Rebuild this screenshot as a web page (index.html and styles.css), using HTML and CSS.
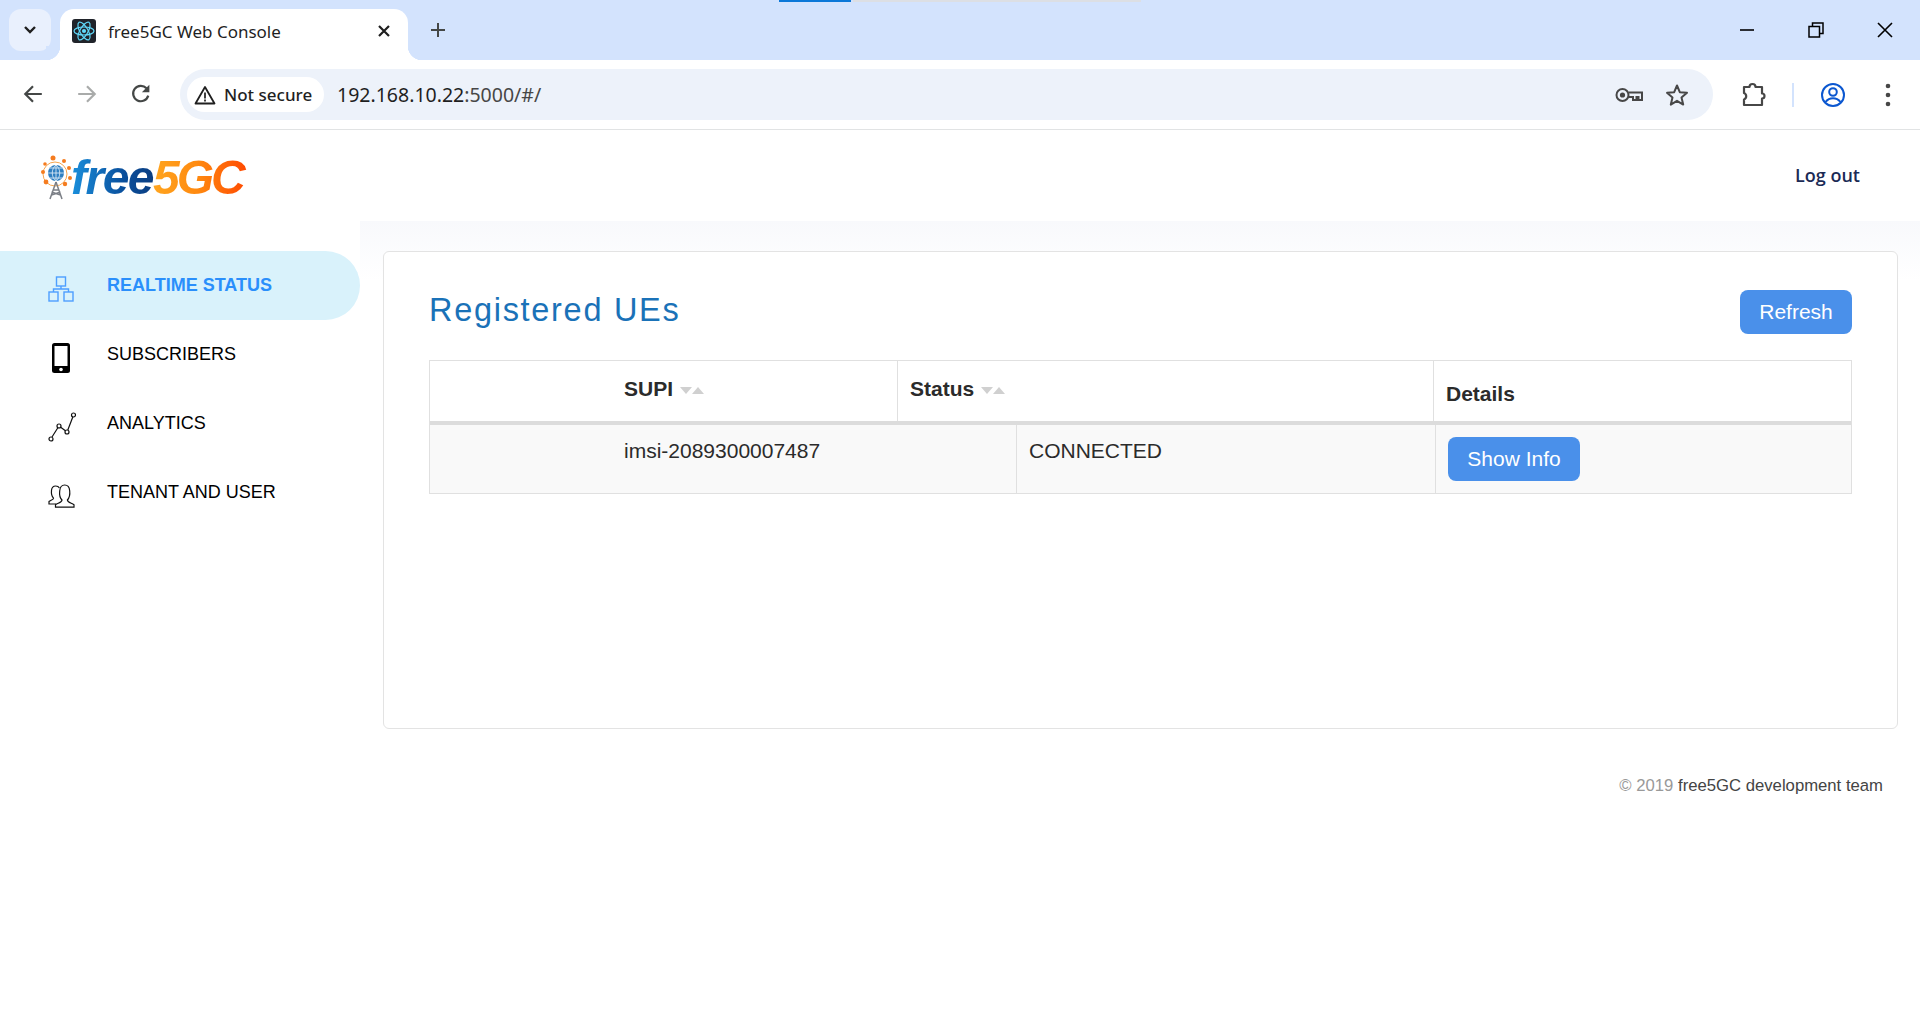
FILE: index.html
```html
<!DOCTYPE html>
<html lang="en">
<head>
    <meta charset="UTF-8">
    <meta name="viewport" content="width=device-width, initial-scale=1.0">
    <title>free5GC Web Console</title>
    <link rel="stylesheet" href="styles.css">
</head>
<body>
    <div class="browser">
        <div class="tabstrip">
            <div class="progress"><span class="progress-done"></span><span class="progress-rest"></span></div>
            <button class="tab-search">
                <svg width="14" height="10" viewBox="0 0 14 10"><path d="M2 2l5 5 5-5" fill="none" stroke="#1f1f1f" stroke-width="2.4"/></svg>
            </button>
            <div class="tab">
                <svg class="favicon" width="24" height="24" viewBox="0 0 24 24">
                    <rect width="24" height="24" rx="3" fill="#20232a"/>
                    <circle cx="12" cy="12" r="2.1" fill="#61dafb"/>
                    <g fill="none" stroke="#61dafb" stroke-width="1.2">
                        <ellipse cx="12" cy="12" rx="10" ry="4"/>
                        <ellipse cx="12" cy="12" rx="10" ry="4" transform="rotate(60 12 12)"/>
                        <ellipse cx="12" cy="12" rx="10" ry="4" transform="rotate(120 12 12)"/>
                    </g>
                </svg>
                <span class="tab-title">free5GC Web Console</span>
                <svg class="tab-close" width="14" height="14" viewBox="0 0 14 14"><path d="M2 2l10 10M12 2L2 12" stroke="#1f1f1f" stroke-width="2.2"/></svg>
            </div>
            <svg class="new-tab" width="18" height="18" viewBox="0 0 18 18"><path d="M9 2v14M2 9h14" stroke="#444746" stroke-width="2"/></svg>
            <div class="window-controls">
                <svg width="16" height="16" viewBox="0 0 16 16"><path d="M1 8h14" stroke="#000" stroke-width="1.6"/></svg>
                <svg width="16" height="16" viewBox="0 0 16 16"><path d="M1 4.5h10.5V15H1zM4.5 4.5V1H15v10.5h-3.5" fill="none" stroke="#000" stroke-width="1.5"/></svg>
                <svg width="16" height="16" viewBox="0 0 16 16"><path d="M1 1l14 14M15 1L1 15" stroke="#000" stroke-width="1.6"/></svg>
            </div>
        </div>
        <div class="toolbar">
            <div class="nav-buttons">
                <svg width="22" height="22" viewBox="0 0 20 20"><path d="M18 10H3M10 3l-7 7 7 7" fill="none" stroke="#444746" stroke-width="2"/></svg>
                <svg width="22" height="22" viewBox="0 0 20 20"><path d="M2 10h15M10 3l7 7-7 7" fill="none" stroke="#a9abaa" stroke-width="2"/></svg>
                <svg width="22" height="22" viewBox="0 0 20 20"><path d="M16.6 11.5A7 7 0 1 1 15 4.8" fill="none" stroke="#444746" stroke-width="2"/><path d="M17.6 1.5v6.8h-6.8z" fill="#444746"/></svg>
            </div>
            <div class="omnibox">
                <div class="chip">
                    <svg width="22" height="20" viewBox="0 0 22 20"><path d="M11 2l9.5 16.5h-19z" fill="none" stroke="#1f1f1f" stroke-width="1.8" stroke-linejoin="round"/><path d="M11 7.5v6M11 14.6v1.8" stroke="#1f1f1f" stroke-width="1.7"/></svg>
                    <span>Not secure</span>
                </div>
                <span class="url">192.168.10.22<span class="url-rest">:5000/#/</span></span>
                <svg class="omni-key" width="28" height="16" viewBox="0 0 28 16"><circle cx="7.5" cy="8" r="6" fill="none" stroke="#474747" stroke-width="2"/><circle cx="7.5" cy="8" r="2.6" fill="#474747"/><path d="M13.5 5.5H27v7.500h-3.500v-3h-2v3H18v-3h-4.500" fill="none" stroke="#474747" stroke-width="2"/></svg>
                <svg class="omni-star" width="24" height="24" viewBox="0 0 24 24"><path d="M12 2.500l2.800 6.700 7.200.6-5.500 4.700 1.700 7.100-6.200-3.800-6.200 3.800 1.700-7.100L2 9.800l7.200-.6z" fill="none" stroke="#474747" stroke-width="2" stroke-linejoin="round"/></svg>
            </div>
            <div class="toolbar-actions">
                <svg width="26" height="26" viewBox="0 0 26 26"><path d="M3 5h5.500a3 3 0 0 1 6 0H21v6.500a2.500 2.500 0 0 1 0 5V23H3v-5.500a3.500 3.500 0 0 0 0-6.500z" fill="none" stroke="#474747" stroke-width="2.200" stroke-linejoin="round"/></svg>
                <span class="toolbar-divider"></span>
                <svg width="26" height="26" viewBox="0 0 26 26"><circle cx="13" cy="13" r="11" fill="none" stroke="#0b57d0" stroke-width="2"/><circle cx="13" cy="10" r="3.800" fill="none" stroke="#0b57d0" stroke-width="2"/><path d="M5.500 20c2-2.600 4.500-3.800 7.500-3.800s5.500 1.200 7.500 3.800" fill="none" stroke="#0b57d0" stroke-width="2"/></svg>
                <svg class="menu-dots" width="6" height="24" viewBox="0 0 6 24"><circle cx="3" cy="3" r="2.300" fill="#474747"/><circle cx="3" cy="12" r="2.300" fill="#474747"/><circle cx="3" cy="21" r="2.300" fill="#474747"/></svg>
            </div>
        </div>
    </div>

    <header class="site-header">
        <div class="logo">
            <svg width="32" height="46" viewBox="0 0 32 46">
                <circle cx="15" cy="19" r="12" fill="none" stroke="#f6a650" stroke-width="1"/>
                <g fill="#f57c1f">
                    <circle cx="13" cy="3" r="2.500"/><circle cx="24" cy="6" r="2"/><circle cx="29" cy="13" r="2"/>
                    <circle cx="30" cy="23" r="2"/><circle cx="25" cy="29" r="2.200"/><circle cx="3" cy="17" r="2"/>
                    <circle cx="6" cy="27" r="2.400"/><circle cx="5" cy="9" r="1.800"/>
                </g>
                <circle cx="16" cy="18" r="8" fill="#2f7fc1"/>
                <path d="M8 18h16M16 10v16M10 13h12M10 23h12M16 10c-5 4-5 12 0 16M16 10c5 4 5 12 0 16" fill="none" stroke="#e6f1fa" stroke-width=".8"/>
                <path d="M16 27l-6 17M16 27l6 17M13 35h6M11.500 40l9-3M20.500 40l-9-3" fill="none" stroke="#7b7f86" stroke-width="1.500"/>
            </svg>
            <span class="logo-free">free</span><span class="logo-5gc">5GC</span>
        </div>
        <a class="logout" href="#">Log out</a>
    </header>

    <div class="page">
        <nav class="sidebar">
            <a class="nav-item active" href="#">
                <svg width="26" height="26" viewBox="0 0 26 26" fill="none" stroke="#4d9fff" stroke-width="1.400">
                    <rect x="8.500" y="1" width="9" height="9"/><rect x="1" y="16" width="9" height="9"/><rect x="16" y="16" width="9" height="9"/>
                    <path d="M13 10v3M5.500 16v-3h15v3"/>
                </svg>
                REALTIME STATUS
            </a>
            <a class="nav-item" href="#">
                <svg width="26" height="32" viewBox="0 0 26 32">
                    <rect x="4" y="1" width="18" height="30" rx="2.500" fill="#000"/>
                    <rect x="6.500" y="4" width="13" height="20" fill="#fff"/>
                    <circle cx="13" cy="27.500" r="1.800" fill="#fff"/>
                </svg>
                SUBSCRIBERS
            </a>
            <a class="nav-item" href="#">
                <svg width="28" height="30" viewBox="0 0 28 30" fill="none" stroke="#111" stroke-width="1.200">
                    <circle cx="3" cy="27" r="2"/><circle cx="11" cy="14" r="2"/><circle cx="19" cy="20" r="2"/><circle cx="25.500" cy="3" r="2"/>
                    <path d="M4 25l6-9.500M12.700 15.200l4.700 3.600M19.800 18l5-13"/>
                </svg>
                ANALYTICS
            </a>
            <a class="nav-item" href="#">
                <svg width="28" height="24" viewBox="0 0 28 24" fill="none" stroke="#111" stroke-width="1.200">
                    <path d="M8 20H1v-2.500c1.500-1.300 4.500-1.800 4.500-3.300-1.800-2-2.300-5-2-8C3.800 3.400 5.500 2 7.700 2c1.600 0 3 .7 3.700 2"/>
                    <path d="M7.500 23.200v-2.500c2.500-1.700 6.500-2.200 6.500-4.700-2-2-2.700-5.500-2.300-9C12 3 14 1 16.700 1s4.700 2 5 5.700c.4 3.500-.3 7-2.300 9.300 0 2.500 4 3 6.600 4.700v2.500z"/>
                </svg>
                TENANT AND USER
            </a>
        </nav>

        <main class="content">
            <section class="card">
                <div class="card-head">
                    <h2>Registered UEs</h2>
                    <button class="btn btn-refresh">Refresh</button>
                </div>
                <div class="ue-table">
                    <div class="ue-row ue-row-head">
                        <div class="cell cell-supi">SUPI <span class="sort"><i class="sort-down"></i><i class="sort-up"></i></span></div>
                        <div class="cell">Status <span class="sort"><i class="sort-down"></i><i class="sort-up"></i></span></div>
                        <div class="cell cell-details">Details</div>
                    </div>
                    <div class="ue-row ue-row-body">
                        <div class="cell cell-supi">imsi-2089300007487</div>
                        <div class="cell">CONNECTED</div>
                        <div class="cell cell-action"><button class="btn btn-info">Show Info</button></div>
                    </div>
                </div>
            </section>
            <footer class="site-footer">© 2019 <span>free5GC development team</span></footer>
        </main>
    </div>
</body>
</html>
```

FILE: styles.css
```css
* {
    box-sizing: border-box;
}

html, body {
    height: 100%;
}

body {
    margin: 0;
    font-family: "Liberation Sans", Arial, sans-serif;
    background-color: #fff;
    color: #333;
    display: flex;
    flex-direction: column;
    overflow: hidden;
}

svg {
    display: block;
    flex: none;
}

/* browser chrome */
.tabstrip {
    height: 60px;
    background-color: #d3e3fd;
    display: flex;
    align-items: flex-start;
    padding: 9px 27px 0 9px;
    position: relative;
}

.progress {
    position: absolute;
    top: 0;
    left: 779px;
    display: flex;
    gap: 2px;
    height: 2px;
}

.progress-done {
    width: 72px;
    background-color: #0b78d8;
}

.progress-rest {
    width: 288px;
    background-color: #dcdfe4;
}

.tab-search {
    width: 42px;
    height: 42px;
    border: none;
    border-radius: 12px;
    background-color: #e9f0fd;
    display: flex;
    align-items: center;
    justify-content: center;
    padding: 0;
}

.tab {
    width: 348px;
    height: 51px;
    margin-left: 9px;
    background-color: #fff;
    border-radius: 14px 14px 0 0;
    display: flex;
    align-items: center;
    padding: 0 17px 8px 12px;
    position: relative;
}

.tab::before,
.tab::after {
    content: "";
    position: absolute;
    bottom: 0;
    width: 14px;
    height: 14px;
}

.tab::before {
    left: -14px;
    background: radial-gradient(circle at 0 0, #d3e3fd 14px, #fff 14.5px);
}

.tab::after {
    right: -14px;
    background: radial-gradient(circle at 100% 0, #d3e3fd 14px, #fff 14.5px);
}

.tab-title {
    margin: 1px 0 0 12px;
    flex: 1;
    font-family: "Noto Sans", sans-serif;
    font-size: 17px;
    color: #1f1f1f;
}

.new-tab {
    margin: 12px 0 0 21px;
}

.window-controls {
    margin-left: auto;
    display: flex;
    gap: 53px;
    padding-top: 13px;
}

.toolbar {
    height: 70px;
    background-color: #fff;
    border-radius: 14px 14px 0 0;
    border-bottom: 1px solid #e1e3e4;
    display: flex;
    align-items: flex-start;
    padding: 9px 24px 0 22px;
    position: relative;
}

.nav-buttons {
    display: flex;
    gap: 32px;
    width: 158px;
    padding-top: 14px;
}

.omnibox {
    width: 1533px;
    height: 51px;
    background-color: #edf2fa;
    border-radius: 26px;
    display: flex;
    align-items: center;
    padding: 0 24px 0 7px;
}

.chip {
    height: 35px;
    width: 137px;
    background-color: #fff;
    border-radius: 18px;
    display: flex;
    align-items: center;
    gap: 8px;
    padding-left: 7px;
    font-family: "Noto Sans", sans-serif;
    font-size: 17px;
    font-weight: 500;
    color: #1f1f1f;
    white-space: nowrap;
}

.url {
    margin-left: 13px;
    font-family: "Noto Sans", sans-serif;
    font-size: 19.500px;
    color: #1f1f1f;
}

.url-rest {
    color: #474747;
}

.omni-key {
    margin-left: auto;
}

.omni-star {
    margin-left: 22px;
}

.toolbar-actions {
    display: flex;
    align-items: center;
    height: 51px;
    margin-left: 28px;
}

.toolbar-divider {
    width: 2px;
    height: 24px;
    background-color: #d3e3fd;
    margin: 0 26px 0 25px;
}

.menu-dots {
    margin-left: 39px;
}

/* app header */
.site-header {
    height: 91px;
    display: flex;
    align-items: center;
    justify-content: space-between;
    padding: 0 60px 0 40px;
}

.logo {
    display: flex;
    align-items: center;
    font-style: italic;
    font-weight: bold;
    font-size: 48px;
    line-height: 46px;
    margin-top: 5px;
}

.logo-free {
    margin-left: -1px;
    letter-spacing: -1.500px;
    padding-right: 6px;
    background: linear-gradient(90deg, #1a8fdc, #0a4f9c 60%, #0b3a7c);
    -webkit-background-clip: text;
    background-clip: text;
    color: transparent;
}

.logo-5gc {
    margin-left: -6px;
    letter-spacing: -3px;
    padding-right: 8px;
    background: linear-gradient(90deg, #ffa51f, #ff8a10 45%, #ff4400);
    -webkit-background-clip: text;
    background-clip: text;
    color: transparent;
}

.logout {
    font-family: "Open Sans", sans-serif;
    font-size: 18px;
    font-weight: 600;
    color: #1b2a55;
    text-decoration: none;
    margin-top: -1px;
}

/* page */
.page {
    flex: 1;
    display: flex;
}

.sidebar {
    width: 360px;
    padding-top: 30px;
    flex: none;
}

.nav-item {
    height: 69px;
    display: flex;
    align-items: center;
    font-size: 18px;
    color: #000;
    text-decoration: none;
    position: relative;
    padding-left: 107px;
}

.nav-item svg {
    position: absolute;
    left: 48px;
    top: calc(50% + 3px);
    transform: translateY(-50%);
}

.nav-item.active {
    background-color: #d9f2fb;
    border-radius: 0 35px 35px 0;
    color: #2a8ffb;
    font-weight: bold;
}

.content {
    flex: 1;
    padding: 30px 22px 0 23px;
    background: linear-gradient(to bottom, #f8f9fc, #fff 60px);
}

.card {
    height: 478px;
    background-color: #fff;
    border: 1px solid #e3e3e3;
    border-radius: 6px;
    padding: 38px 45px 0 45px;
}

.card-head {
    display: flex;
    justify-content: space-between;
    height: 70px;
}

.card-head h2 {
    margin: 0;
    font-size: 32.500px;
    line-height: 40px;
    font-weight: normal;
    letter-spacing: 1.700px;
    color: #1a72b8;
}

.btn {
    border: none;
    border-radius: 8px;
    background-color: #4a90ea;
    color: #fff;
    font-family: "Liberation Sans", Arial, sans-serif;
    font-size: 21px;
    height: 44px;
    padding: 0;
}

.btn-refresh {
    width: 112px;
}

.btn-info {
    width: 132px;
}

.ue-table {
    border: 1px solid #e0e0e0;
    font-size: 21px;
    color: #2b2b2b;
}

.ue-row {
    display: grid;
}

.ue-row-head {
    grid-template-columns: 468px 536px 1fr;
    height: 64px;
    border-bottom: 4px solid #dcdcdc;
    font-weight: bold;
}

.ue-row-head .cell {
    padding-top: 16px;
}

.ue-row-head .cell-details {
    padding-top: 21px;
}

.ue-row-body {
    grid-template-columns: 587px 419px 1fr;
    height: 68px;
    background-color: #f9f9f9;
}

.cell {
    padding: 14px 12px 0;
    border-right: 1px solid #e0e0e0;
}

.cell:last-child {
    border-right: none;
}

.cell-supi {
    padding-left: 194px;
}

.ue-row-body .cell-action {
    padding-top: 12px;
}

.sort {
    display: inline-flex;
    gap: 0;
    margin-left: 1px;
    vertical-align: middle;
}

.sort i {
    border-left: 6px solid transparent;
    border-right: 6px solid transparent;
}

.sort-down {
    border-top: 7px solid #d0d0d0;
}

.sort-up {
    border-bottom: 7px solid #d0d0d0;
}

.site-footer {
    margin-top: 47px;
    padding-right: 15px;
    text-align: right;
    font-size: 16.700px;
    color: #999;
}

.site-footer span {
    color: #444;
}
```
